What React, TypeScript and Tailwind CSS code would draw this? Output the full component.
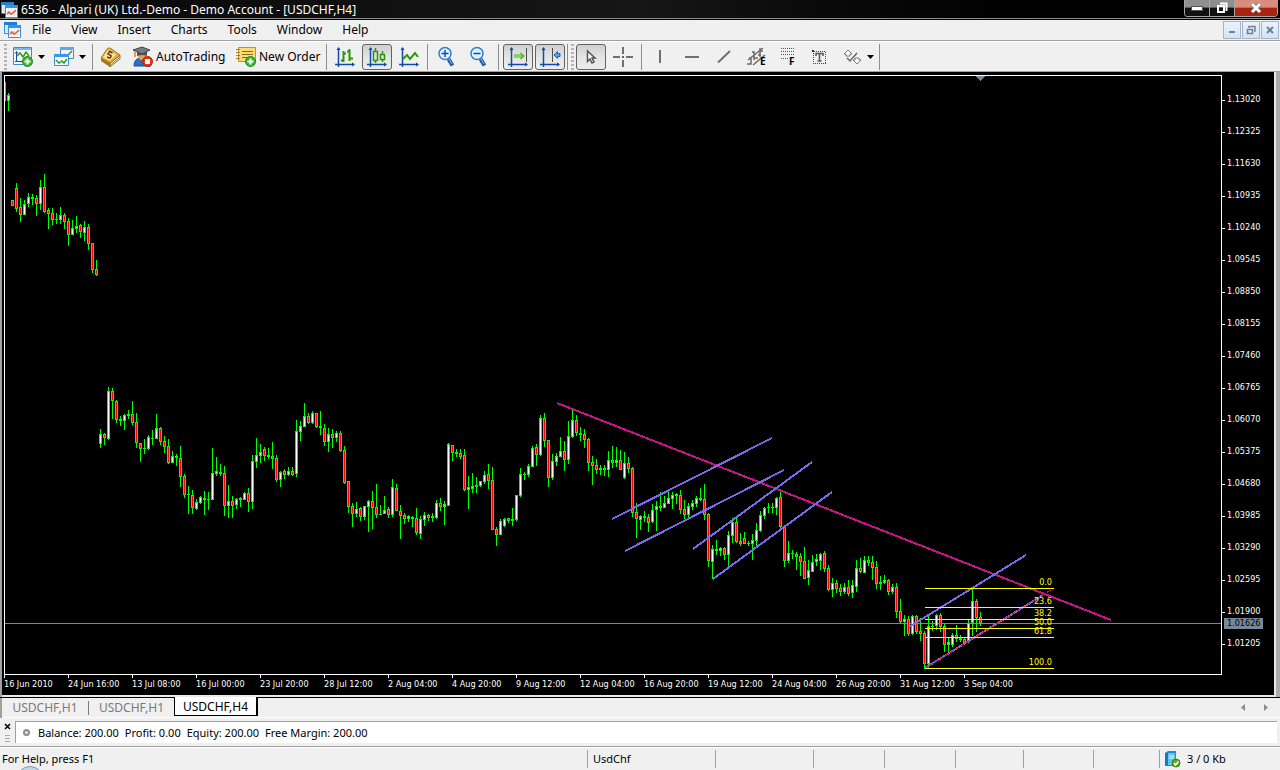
import type { ReactNode } from 'react';
import clsx from 'clsx';

// [high, body top, body bottom, low, rising]
type Candle = [number, number, number, number, 0 | 1];

const FIRST_CANDLE_X = 8;
const CANDLE_STEP = 4;

const CANDLES: Candle[] = [
  [93, 95, 100, 110, 1], [200, 200, 205, 205, 0], [183, 188, 208, 211, 0], [198, 207, 214, 221, 0],
  [200, 204, 214, 214, 1], [193, 197, 203, 206, 1], [194, 197, 198, 204, 1], [195, 198, 203, 215, 0],
  [180, 187, 203, 209, 1], [174, 187, 211, 212, 0], [208, 210, 213, 228, 0], [208, 213, 219, 224, 0],
  [213, 219, 219, 223, 1], [207, 215, 219, 223, 1], [213, 215, 221, 228, 0], [218, 221, 234, 245, 0],
  [220, 228, 234, 234, 1], [216, 226, 228, 232, 1], [224, 225, 231, 237, 0], [221, 227, 232, 240, 1],
  [224, 227, 243, 249, 0], [243, 243, 269, 272, 0], [260, 269, 274, 275, 0], [429, 434, 443, 447, 1],
  [433, 434, 437, 444, 0], [387, 391, 438, 439, 1], [388, 391, 400, 418, 0], [400, 401, 419, 422, 0],
  [416, 419, 420, 425, 1], [414, 415, 420, 429, 1], [410, 414, 415, 418, 1], [401, 414, 422, 424, 0],
  [413, 422, 442, 447, 0], [443, 443, 448, 461, 0], [439, 448, 448, 453, 1], [435, 437, 448, 449, 1],
  [430, 438, 438, 444, 1], [414, 428, 438, 438, 1], [427, 428, 441, 444, 0], [436, 441, 446, 452, 0],
  [439, 446, 462, 463, 0], [451, 456, 462, 462, 1], [454, 456, 457, 465, 1], [446, 458, 476, 486, 0],
  [474, 476, 494, 497, 0], [486, 494, 494, 513, 1], [490, 495, 507, 513, 0], [499, 502, 508, 509, 1],
  [496, 497, 502, 503, 1], [491, 498, 499, 514, 1], [492, 499, 499, 509, 1], [448, 473, 499, 499, 1],
  [457, 471, 473, 475, 1], [464, 472, 473, 475, 1], [466, 473, 505, 515, 0], [485, 501, 505, 517, 1],
  [496, 501, 505, 517, 0], [498, 499, 504, 508, 1], [497, 498, 499, 506, 1], [492, 493, 499, 499, 1],
  [488, 493, 501, 511, 0], [455, 461, 501, 508, 1], [438, 455, 461, 467, 1], [444, 452, 455, 462, 1],
  [447, 449, 455, 460, 0], [448, 455, 456, 458, 1], [442, 456, 458, 468, 0], [455, 458, 479, 481, 0],
  [471, 472, 479, 486, 1], [469, 471, 474, 478, 0], [467, 471, 474, 475, 1], [467, 471, 474, 475, 0],
  [420, 431, 473, 476, 1], [421, 426, 431, 440, 1], [403, 416, 426, 426, 1], [413, 416, 422, 423, 0],
  [411, 413, 422, 423, 1], [413, 413, 426, 427, 0], [411, 426, 427, 434, 1], [424, 428, 441, 445, 0],
  [428, 434, 441, 451, 1], [429, 434, 437, 447, 0], [431, 433, 437, 441, 1], [431, 433, 450, 451, 0],
  [446, 450, 482, 483, 0], [481, 481, 506, 512, 0], [503, 506, 513, 526, 0], [502, 509, 513, 516, 1],
  [507, 508, 516, 520, 0], [506, 506, 516, 519, 1], [500, 501, 506, 531, 1], [491, 501, 507, 528, 0],
  [484, 507, 514, 517, 0], [505, 514, 514, 514, 1], [496, 510, 513, 513, 1], [507, 509, 514, 517, 0],
  [479, 487, 514, 516, 1], [484, 488, 510, 510, 0], [505, 511, 515, 538, 0], [513, 515, 518, 523, 0],
  [515, 516, 518, 521, 1], [516, 517, 518, 526, 1], [508, 518, 532, 534, 0], [516, 519, 533, 538, 1],
  [512, 515, 519, 525, 1], [514, 515, 517, 520, 0], [513, 516, 517, 521, 1], [500, 503, 517, 518, 1],
  [498, 503, 506, 510, 0], [501, 504, 506, 524, 1], [443, 444, 505, 505, 1], [445, 445, 452, 460, 0],
  [449, 452, 453, 456, 1], [449, 453, 456, 458, 0], [449, 455, 489, 490, 0], [476, 487, 489, 508, 1],
  [473, 486, 488, 492, 1], [477, 485, 486, 492, 1], [481, 481, 485, 486, 1], [471, 475, 481, 483, 1],
  [464, 474, 480, 488, 0], [467, 480, 529, 529, 0], [527, 529, 534, 545, 0], [519, 521, 534, 534, 1],
  [518, 519, 525, 526, 1], [518, 518, 520, 522, 0], [508, 519, 520, 525, 1], [495, 495, 519, 520, 1],
  [468, 474, 495, 496, 1], [472, 474, 474, 479, 1], [464, 466, 474, 476, 1], [446, 448, 466, 466, 1],
  [444, 447, 454, 465, 0], [415, 418, 454, 455, 1], [413, 418, 440, 446, 0], [440, 440, 477, 486, 0],
  [454, 461, 477, 479, 1], [453, 456, 461, 465, 1], [437, 451, 456, 456, 1], [441, 451, 459, 470, 0],
  [421, 436, 459, 463, 1], [410, 420, 436, 437, 1], [415, 420, 432, 435, 0], [427, 433, 434, 440, 1],
  [429, 434, 439, 447, 0], [438, 439, 462, 470, 0], [456, 462, 465, 484, 0], [459, 465, 469, 473, 0],
  [465, 468, 469, 474, 1], [465, 468, 469, 475, 1], [451, 460, 469, 476, 1], [446, 460, 462, 467, 0],
  [447, 460, 462, 466, 1], [450, 460, 469, 469, 0], [452, 463, 477, 478, 1], [457, 463, 468, 472, 0],
  [467, 468, 512, 516, 0], [503, 512, 518, 537, 0], [515, 516, 519, 529, 1], [511, 516, 517, 521, 1],
  [514, 517, 522, 531, 0], [504, 510, 521, 522, 1], [501, 506, 509, 530, 1], [492, 506, 507, 510, 1],
  [496, 503, 507, 507, 1], [490, 498, 503, 503, 1], [492, 495, 498, 508, 1], [493, 494, 495, 503, 1],
  [490, 495, 509, 513, 0], [500, 509, 514, 518, 0], [503, 506, 514, 517, 1], [500, 503, 506, 509, 1],
  [496, 498, 503, 506, 1], [488, 498, 499, 500, 1], [484, 499, 514, 519, 0], [513, 514, 560, 566, 0],
  [545, 549, 561, 578, 1], [540, 549, 550, 554, 1], [547, 548, 550, 555, 1], [547, 548, 554, 559, 0],
  [531, 535, 554, 567, 1], [518, 522, 535, 542, 1], [518, 522, 541, 542, 0], [533, 541, 543, 545, 0],
  [532, 538, 543, 543, 0], [541, 543, 543, 545, 1], [534, 540, 543, 559, 1], [523, 530, 540, 545, 1],
  [511, 515, 530, 531, 1], [507, 508, 515, 518, 1], [503, 507, 507, 512, 1], [503, 507, 507, 512, 1],
  [497, 498, 507, 514, 1], [492, 497, 526, 527, 0], [525, 527, 560, 566, 0], [541, 553, 560, 562, 1],
  [550, 553, 553, 558, 1], [552, 554, 556, 569, 0], [553, 556, 561, 575, 0], [547, 561, 578, 578, 0],
  [560, 570, 577, 584, 1], [555, 562, 571, 571, 1], [554, 559, 561, 565, 1], [553, 554, 560, 569, 1],
  [551, 553, 568, 571, 0], [565, 568, 589, 590, 0], [578, 583, 589, 596, 1], [580, 583, 588, 592, 0],
  [584, 588, 591, 595, 0], [583, 587, 591, 593, 1], [580, 587, 593, 595, 0], [580, 585, 592, 597, 1],
  [560, 568, 586, 591, 1], [558, 568, 571, 572, 0], [556, 560, 572, 572, 1], [556, 560, 562, 565, 0],
  [556, 562, 567, 579, 0], [561, 567, 583, 588, 0], [576, 582, 583, 589, 1], [575, 580, 582, 583, 1],
  [579, 580, 591, 594, 0], [584, 587, 591, 593, 1], [583, 587, 611, 617, 0], [599, 611, 621, 623, 0],
  [615, 619, 621, 635, 1], [616, 619, 633, 635, 0], [615, 616, 633, 634, 1], [615, 616, 631, 633, 0],
  [618, 631, 633, 640, 0], [631, 633, 663, 668, 0], [615, 626, 663, 667, 1], [621, 626, 626, 630, 1],
  [614, 615, 625, 629, 1], [613, 615, 626, 631, 0], [623, 626, 644, 651, 0], [638, 642, 644, 652, 1],
  [633, 635, 644, 646, 1], [625, 635, 638, 641, 0], [635, 638, 639, 641, 1], [637, 639, 642, 642, 0],
  [620, 623, 641, 642, 1], [589, 601, 622, 635, 1], [599, 601, 617, 631, 0], [612, 617, 622, 625, 0],
];

const TREND_LINES = [
  { x1: 557, y1: 403, x2: 1111, y2: 620, color: '#c71585' },
  { x1: 612, y1: 519, x2: 772, y2: 438, color: '#7b68ee' },
  { x1: 625, y1: 551, x2: 784, y2: 470, color: '#7b68ee' },
  { x1: 693, y1: 549, x2: 812, y2: 462, color: '#7b68ee' },
  { x1: 713, y1: 579, x2: 832, y2: 492, color: '#7b68ee' },
  { x1: 909, y1: 627, x2: 1026, y2: 555, color: '#7b68ee' },
  { x1: 925, y1: 668, x2: 1043, y2: 595, color: '#7b68ee' },
];

const FIBO_LEVELS = [
  { label: '0.0', y: 588 },
  { label: '23.6', y: 607 },
  { label: '38.2', y: 619 },
  { label: '50.0', y: 628 },
  { label: '61.8', y: 637 },
  { label: '100.0', y: 668 },
];

const PRICES = [
  '1.13020', '1.12325', '1.11630', '1.10935', '1.10240', '1.09545',
  '1.08850', '1.08155', '1.07460', '1.06765', '1.06070', '1.05375',
  '1.04680', '1.03985', '1.03290', '1.02595', '1.01900', '1.01205',
];

const TIMES = [
  '16 Jun 2010', '24 Jun 16:00', '13 Jul 08:00', '16 Jul 00:00',
  '23 Jul 20:00', '28 Jul 12:00', '2 Aug 04:00', '4 Aug 20:00',
  '9 Aug 12:00', '12 Aug 04:00', '16 Aug 20:00', '19 Aug 12:00',
  '24 Aug 04:00', '26 Aug 20:00', '31 Aug 12:00', '3 Sep 04:00',
];

const MENUS = ['File', 'View', 'Insert', 'Charts', 'Tools', 'Window', 'Help'];

function Icon({ size = 20, children }: { size?: number; children: ReactNode }) {
  return (
    <svg
      width={size}
      height={size}
      viewBox={`0 0 ${size} ${size}`}
      fill="none"
      className="shrink-0 overflow-visible"
      aria-hidden="true"
    >
      {children}
    </svg>
  );
}

function AppIcon() {
  return (
    <Icon size={17}>
      <path d="M.5 1.5h12v11H.5z" fill="#e8f3fb" stroke="#2f8fdc" />
      <path d="M0 1h13v3H0z" fill="#1f7fd6" />
      <path d="M2 6h3M2 8h3M2 10h3" stroke="#b9d3e6" />
      <path d="M4.5 4.5h12v12h-12z" fill="#fff" stroke="#3f8fd0" />
      <path d="M4 4h13v3H4z" fill="#2f96e8" />
      <path d="M7.5 7v9M10.5 7v9M13.5 7v9M5 10.5h11M5 13.5h11" stroke="#dfe6ec" />
      <path d="m6 13 2-2 2 2 2-1 3-3" stroke="#f0562a" strokeWidth="1.5" />
    </Icon>
  );
}

function PlusBadge() {
  return (
    <>
      <circle cx="14.5" cy="14.5" r="5" fill="#3fb52c" stroke="#1f8a18" />
      <path d="M14.5 11.5v6M11.5 14.5h6" stroke="#fff" strokeWidth="2" />
    </>
  );
}

function NewChartIcon() {
  return (
    <Icon>
      <path d="M.5.5h18v17H.5z" fill="#eef7fd" stroke="#3c8ed0" />
      <path d="M1 1h17v2H1z" fill="#79b9ea" />
      <path d="M3.5 5v10M2 14.5h15M2 6.5l1.5-2L5 6.5" stroke="#1c4f9a" />
      <path d="m4 9 3-3 3 4 3-5 3 4" stroke="#2f9a1c" strokeWidth="1.5" />
      <PlusBadge />
    </Icon>
  );
}

function ProfilesIcon() {
  return (
    <Icon>
      <path d="M6.5.5h13v11h-13z" fill="#eef7fd" stroke="#3c8ed0" />
      <path d="M6 0h14v3H6z" fill="#5fa9e6" />
      <path d="m10 7 3 2 5-5" stroke="#2f9a1c" strokeWidth="1.5" />
      <path d="M.5 7.5h14v11H.5z" fill="#f4faff" stroke="#3c8ed0" />
      <path d="M0 7h15v3H0z" fill="#3c98e2" />
      <path d="m2 13 3 3 3-2 2 2 3-4" stroke="#2f9a1c" strokeWidth="1.5" />
    </Icon>
  );
}

function BookIcon() {
  return (
    <Icon>
      <path d="m0 11 9 5v4l-9-6z" fill="#a87418" />
      <path d="m9 16 10-8v4L9 20z" fill="#f3e6b8" stroke="#7d5710" strokeWidth=".8" />
      <path d="m9.500 18 9.500-8" stroke="#8a6420" strokeWidth=".8" />
      <path d="M0 11 6 2q1.500-2 4-.5L19 8 9 16z" fill="#e3b23c" stroke="#94670f" strokeWidth=".8" />
      <path d="M2 10.500 7 3l8 4.500-6 6z" fill="#fae3a0" />
      <path d="m11.500 6-3-1.500L7 7l3 1.500q.5 2-1.500 2.500L6 10" stroke="#5c400a" strokeWidth="1.400" />
    </Icon>
  );
}

function AutoTradingIcon() {
  return (
    <Icon>
      <path d="M1 19q0-7 6-8h5q5 2 6 8z" fill="#2b6fc4" stroke="#184d94" />
      <path d="M5 8q0 5 4 5t4-5z" fill="#e7a23c" />
      <path d="M4 4h10v5q-5-2-10 0z" fill="#4b4f55" />
      <path d="m0 3 9-3 8 3-8 4z" fill="#777c82" stroke="#44484d" />
      <path d="M2 4v6" stroke="#d18f26" strokeWidth="1.5" />
      <circle cx="14.5" cy="14.5" r="5" fill="#e53518" stroke="#b81c08" />
      <path d="M12 12h5v5h-5z" fill="#fff" />
    </Icon>
  );
}

function NewOrderIcon() {
  return (
    <Icon>
      <path d="M2.5.5h17v14h-17z" fill="#fbdc74" stroke="#c3912a" />
      <path d="M6 4.5h11M6 7.5h11M6 10.5h7" stroke="#8f681c" />
      <path d="M0 2.5h4M0 5.5h4M0 8.5h4M0 11.5h4" stroke="#b07e21" />
      <PlusBadge />
    </Icon>
  );
}

function Axes() {
  return (
    <>
      <path d="M3.5 1v19M0 17.5h19" stroke="#1349ad" strokeWidth="1.5" />
      <path d="m1.5 3 2-3 2 3zM17 15.5l3 2-3 2z" fill="#1349ad" />
    </>
  );
}

function BarsIcon() {
  return (
    <Icon>
      <Axes />
      <path d="M8.5 4v11M6 13.5h3M8 6.5h3M14.5 2v12M12 4.5h3M14 11.5h4" stroke="#2b9708" strokeWidth="2" />
    </Icon>
  );
}

function CandlesIcon() {
  return (
    <Icon>
      <Axes />
      <path d="M8.5 1v3M8.5 13v3M6.5 4.5h4v9h-4zM15.5 4v3M15.5 12v3M13.5 7.5h4v5h-4z" stroke="#2b9708" strokeWidth="1.5" />
    </Icon>
  );
}

function LineIcon() {
  return (
    <Icon>
      <Axes />
      <path d="m4 12 4-4 3 4 5-6 3 4" stroke="#2b9708" strokeWidth="2" />
    </Icon>
  );
}

function ZoomIcon({ plus = false }: { plus?: boolean }) {
  return (
    <Icon>
      <path d="m11.5 12 4 6.5" stroke="#2458a8" strokeWidth="4" />
      <path d="m12 12 3 5" stroke="#8cb8e8" />
      <circle cx="8" cy="6.5" r="6" fill="#dff1fd" stroke="#2c7fd2" strokeWidth="1.5" />
      <path d="M4.5 6.5h7" stroke="#124ba8" strokeWidth="1.5" />
      {plus && <path d="M8 3v7" stroke="#124ba8" strokeWidth="1.5" />}
    </Icon>
  );
}

function AutoScrollIcon() {
  return (
    <Icon>
      <Axes />
      <path d="M18.5 1v14" stroke="#4d4d4d" />
      <path d="M6 7.5h6.500V5l4.500 4-4.500 4v-2.500H6z" fill="#57b82f" />
      <path d="M6 9h8" stroke="#b4e58c" />
    </Icon>
  );
}

function ChartShiftIcon() {
  return (
    <Icon>
      <Axes />
      <path d="M12.5 1v14" stroke="#4d4d4d" />
      <path d="m14 8 3.5-3.5v2H20v3h-2.5v2z" fill="#5f9eea" stroke="#1f60bd" />
    </Icon>
  );
}

function CursorIcon() {
  return (
    <Icon>
      <path d="M6.5 4v10.5l2.500-2.500 2 4 2-1-2-4h3z" fill="#fff" stroke="#555" strokeWidth="1.5" />
    </Icon>
  );
}

function CrosshairIcon() {
  return (
    <Icon>
      <path d="M10 0v7M10 13v7M0 10h7M13 10h7" stroke="#707070" strokeWidth="2" />
      <path d="M9 9h2v2H9z" fill="#666" />
    </Icon>
  );
}

function ChannelIcon() {
  return (
    <Icon>
      <path d="m2 13 15-12M7 18 19 8M1 17h4v-6H3M8 13V5H6M8 11h4M14 10V1M12 8h3M14 4h3" stroke="#6b6b6b" strokeWidth="1.5" />
      <text x="14" y="18" fill="#000" className="text-[10px] font-bold">E</text>
    </Icon>
  );
}

function FiboIcon() {
  return (
    <Icon>
      <path
        d="M3 1.5h14M3 4.5h14M3 7.5h14M3 11.5h7"
        stroke="#555"
        strokeDasharray="1 1"
        shapeRendering="crispEdges"
      />
      <text x="11" y="18" fill="#000" className="text-[10px] font-bold">F</text>
    </Icon>
  );
}

function TextIcon() {
  return (
    <Icon>
      <path d="M3.5 4.5h12v12h-12z" stroke="#444" strokeDasharray="1 1" shapeRendering="crispEdges" />
      <path d="M2 3h2v2H2z" fill="#333" />
      <path d="M6 9V6.500h7V9M9.500 7v7M7.500 14h4" stroke="#555" strokeWidth="1.5" />
    </Icon>
  );
}

function ArrowsIcon() {
  return (
    <Icon>
      <path d="m5 4 4 4H7v2H3V8H1zM14 18l-4-4h2v-2h4v2h2z" fill="#fff" stroke="#777" transform="translate(1 -1)" />
      <path d="m5 11 3 3 7-8" stroke="#666" strokeWidth="1.5" />
    </Icon>
  );
}

function Caret() {
  return (
    <svg width="7" height="4" aria-hidden="true">
      <path d="M0 0h7L3.5 4z" fill="#000" />
    </svg>
  );
}

function Grip() {
  return (
    <span className="h-[26px] w-[3px] shrink-0 bg-[repeating-linear-gradient(#b4b4b4_0_2px,#efefef_2px_4px)]" />
  );
}

function Separator() {
  return <span className="h-[26px] w-px shrink-0 bg-[#8e8e8e]" />;
}

function ToolButton({
  label,
  pressed = false,
  children,
}: {
  label: string;
  pressed?: boolean;
  children: ReactNode;
}) {
  return (
    <button
      type="button"
      aria-label={label}
      aria-pressed={pressed}
      className={clsx(
        'flex h-[26px] w-[30px] shrink-0 items-center justify-center rounded-[3px] border',
        pressed
          ? 'border-[#626262] bg-linear-to-b from-[#cfcfcf] via-[#e4e4e4] to-[#ececec]'
          : 'border-transparent',
      )}
    >
      {children}
    </button>
  );
}

function TitleBar() {
  return (
    <header className="flex h-5 shrink-0 items-start border-b border-black bg-linear-to-r from-[#080808] via-[#161616] to-black pl-px text-white shadow-[inset_0_-1px_0_#8b8b8b]">
      <div className="mt-px">
        <AppIcon />
      </div>
      <h1 className="ml-[3px] flex-1 text-xs leading-[19px]">
        6536 - Alpari (UK) Ltd.-Demo - Demo Account - [USDCHF,H4]
      </h1>
      <div className="mr-0.5 flex h-[17px] overflow-hidden rounded-b-[4px] border border-t-0 border-[#a5a5a5]">
        <button
          type="button"
          aria-label="Minimize"
          className="flex w-[25px] items-center justify-center border-r border-[#a5a5a5] bg-linear-to-b from-[#8f8f8f] from-45% to-[#111] to-50%"
        >
          <svg width="12" height="5" aria-hidden="true">
            <rect x=".5" y=".5" width="11" height="4" fill="#fff" stroke="#555" />
          </svg>
        </button>
        <button
          type="button"
          aria-label="Restore"
          className="flex w-[25px] items-center justify-center border-r border-[#a5a5a5] bg-linear-to-b from-[#8f8f8f] from-45% to-[#111] to-50%"
        >
          <svg width="12" height="12" fill="none" aria-hidden="true">
            <path d="M4 1.5h6.500V9" stroke="#fff" strokeWidth="2" />
            <path d="M2 4h6v6H2z" stroke="#fff" strokeWidth="2" />
          </svg>
        </button>
        <button
          type="button"
          aria-label="Close"
          className="flex w-[42px] items-center justify-center bg-linear-to-b from-[#d98d7c] from-45% to-[#a82410] to-50%"
        >
          <svg width="12" height="10" fill="none" aria-hidden="true">
            <path d="m2 1 8 8M10 1 2 9" stroke="#555" strokeWidth="4" />
            <path d="m2 1 8 8M10 1 2 9" stroke="#fff" strokeWidth="3" />
          </svg>
        </button>
      </div>
    </header>
  );
}

function MdiButton({ label, children }: { label: string; children: ReactNode }) {
  return (
    <button
      type="button"
      aria-label={label}
      className="flex size-[18px] items-center justify-center border border-[#a3b4c8] bg-linear-to-b from-[#eaf3fc] to-[#d3e3f4]"
    >
      <svg width="10" height="10" fill="none" stroke="#6f8196" strokeWidth="2" aria-hidden="true">
        {children}
      </svg>
    </button>
  );
}

function MenuBar() {
  return (
    <nav className="flex h-[22px] shrink-0 items-start border-b border-white bg-[#f0f0f0] pt-px pl-1 shadow-[inset_0_-1px_0_#a0a0a0]">
      <AppIcon />
      <div className="flex flex-1 pl-px">
        {MENUS.map((menu) => (
          <button key={menu} type="button" className="px-[10px] text-xs leading-[18px]">
            {menu}
          </button>
        ))}
      </div>
      <div className="mr-px flex gap-px">
        <MdiButton label="Minimize chart">
          <path d="M2 7h6" />
        </MdiButton>
        <MdiButton label="Restore chart">
          <path d="M3 3V1.5h6V6H8M1.5 4.5h5v4h-5z" strokeWidth="1.5" />
        </MdiButton>
        <MdiButton label="Close chart">
          <path d="m2 2 6 6M8 2 2 8" />
        </MdiButton>
      </div>
    </nav>
  );
}

function Toolbar() {
  return (
    <div
      role="toolbar"
      className="flex h-[29px] shrink-0 items-center bg-[#f0f0f0] pl-1"
    >
      <Grip />
      <button type="button" aria-label="New chart" className="flex w-10 items-center gap-[5px] pl-1.5">
        <NewChartIcon />
        <Caret />
      </button>
      <button type="button" aria-label="Profiles" className="flex w-[45px] items-center gap-[5px] pl-[7px]">
        <ProfilesIcon />
        <Caret />
      </button>
      <Separator />
      <button type="button" aria-label="MetaEditor" className="flex w-10 pl-2">
        <BookIcon />
      </button>
      <button type="button" className="flex w-[103px] items-center gap-[3px] text-xs">
        <AutoTradingIcon />
        AutoTrading
      </button>
      <button type="button" className="flex w-[90px] items-center gap-[3px] text-xs">
        <NewOrderIcon />
        New Order
      </button>
      <Separator />
      <div className="flex gap-0.5 px-[3px]">
        <ToolButton label="Bar chart"><BarsIcon /></ToolButton>
        <ToolButton label="Candlesticks" pressed><CandlesIcon /></ToolButton>
        <ToolButton label="Line chart"><LineIcon /></ToolButton>
      </div>
      <Separator />
      <div className="flex gap-0.5 px-1">
        <ToolButton label="Zoom in"><ZoomIcon plus /></ToolButton>
        <ToolButton label="Zoom out"><ZoomIcon /></ToolButton>
      </div>
      <Separator />
      <div className="flex gap-0.5 pr-0.5 pl-1">
        <ToolButton label="Auto scroll" pressed><AutoScrollIcon /></ToolButton>
        <ToolButton label="Chart shift" pressed><ChartShiftIcon /></ToolButton>
      </div>
      <Separator />
      <div className="flex items-center gap-0.5 px-[3px]">
        <Grip />
        <ToolButton label="Cursor" pressed><CursorIcon /></ToolButton>
        <ToolButton label="Crosshair"><CrosshairIcon /></ToolButton>
      </div>
      <Separator />
      <div className="flex gap-0.5 pl-[3px]">
        <ToolButton label="Vertical line">
          <Icon><path d="M10 3v13" stroke="#707070" strokeWidth="2" /></Icon>
        </ToolButton>
        <ToolButton label="Horizontal line">
          <Icon><path d="M3 10h14" stroke="#707070" strokeWidth="2" /></Icon>
        </ToolButton>
        <ToolButton label="Trendline">
          <Icon><path d="M4 15.5 16 4" stroke="#707070" strokeWidth="2" /></Icon>
        </ToolButton>
        <ToolButton label="Equidistant channel"><ChannelIcon /></ToolButton>
        <ToolButton label="Fibonacci retracement"><FiboIcon /></ToolButton>
        <ToolButton label="Text label"><TextIcon /></ToolButton>
        <button type="button" aria-label="Arrows" className="flex w-[42px] items-center gap-[5px] pl-[5px]">
          <ArrowsIcon />
          <Caret />
        </button>
      </div>
      <Separator />
    </div>
  );
}

function CandleShape({ x, candle }: { x: number; candle: Candle }) {
  const [high, top, bottom, low, rising] = candle;
  const inner = bottom - top - 1;

  return (
    <>
      <rect x={x} y={high} width="1" height={low - high + 1} fill="#00ff00" />
      <rect x={x - 1} y={top} width="3" height={bottom - top + 1} fill="#00ff00" />
      {inner > 0 && (
        <rect x={x} y={top + 1} width="1" height={inner} fill={rising ? '#ffffff' : '#ff0000'} />
      )}
    </>
  );
}

function Plot() {
  return (
    <svg
      className="h-full min-h-[598px] w-full text-[9px]"
      shapeRendering="crispEdges"
      role="img"
      aria-label="USDCHF H4 candlestick chart"
    >
      <g transform="translate(-5 -76)">
        <path d="M0 623.5h1600" stroke="#778899" />
        <path d="M975 76h11l-5.5 5z" fill="#778899" />
        <rect x="5" y="82" width="1" height="19" fill="#00ff00" />
        {CANDLES.map((candle, i) => (
          <CandleShape key={i} x={FIRST_CANDLE_X + i * CANDLE_STEP} candle={candle} />
        ))}
        {TREND_LINES.map(({ color, ...line }) => (
          <line key={`${line.x1}-${line.y1}`} {...line} stroke={color} strokeWidth="2" />
        ))}
        <path d="M925 668.5 1053 588.5" stroke="#ff0000" strokeDasharray="4 2" />
        {FIBO_LEVELS.map(({ label, y }) => (
          <g key={label}>
            <rect x="925" y={y} width="129" height="1" fill="#ffff00" />
            <text x="1052" y={y - 3} textAnchor="end" fill="#ffff00">
              {label}
            </text>
          </g>
        ))}
      </g>
    </svg>
  );
}

function ChartWindow() {
  return (
    <main className="flex flex-1 border-t border-l-2 border-[#a0a0a0] bg-[#ababab] pr-1">
      <div className="grid flex-1 grid-cols-[minmax(0,1fr)_52px] grid-rows-[1fr_20px] border-r-2 border-b-2 border-[#e8e8e8] bg-black pt-[3px] pl-0.5 font-['DejaVu_Sans_Condensed','DejaVu_Sans',sans-serif] text-[9px] text-white">
        <div className="flex overflow-hidden border border-white">
          <Plot />
        </div>
        <div className="relative pt-[9px]">
          {PRICES.map((price) => (
            <div key={price} className="flex h-8 items-center gap-0.5">
              <span className="h-px w-[3px] bg-white" />
              {price}
            </div>
          ))}
          <span className="absolute top-[543px] left-0.5 h-[11px] w-[39px] bg-[#778899] pl-[3px] leading-[11px] text-black">
            1.01626
          </span>
        </div>
        <div className="col-span-2 flex overflow-hidden">
          {TIMES.map((time) => (
            <div key={time} className="w-16 shrink-0 whitespace-nowrap">
              <span className="block h-[3px] w-px bg-white" />
              <span className="block leading-[13px]">{time}</span>
            </div>
          ))}
        </div>
      </div>
    </main>
  );
}

function ChartTabs() {
  return (
    <div className="flex h-[21px] shrink-0 items-start border-t border-black bg-[#f0f0f0] text-xs text-[#7a7a7a] shadow-[inset_2px_0_0_#a0a0a0,inset_0_-1px_0_#fff]">
      <div role="tablist" className="flex flex-1 items-start">
        <button type="button" role="tab" aria-selected="false" className="w-[88px] pl-0.5 leading-5">
          USDCHF,H1
        </button>
        <span className="mt-[3px] h-[14px] w-px bg-[#7a7a7a]" />
        <button type="button" role="tab" aria-selected="false" className="w-[85px] leading-5">
          USDCHF,H1
        </button>
        <button
          type="button"
          role="tab"
          aria-selected="true"
          className="-mt-px h-[19px] w-[84px] border border-t-0 border-r-2 border-black bg-white leading-5 text-black"
        >
          USDCHF,H4
        </button>
      </div>
      <div className="mt-1.5 mr-3 flex gap-[17px]">
        <button type="button" aria-label="Scroll tabs left">
          <svg width="5" height="7" className="block" aria-hidden="true">
            <path d="M4 0v7L0 3.5z" fill="#8c8c8c" />
          </svg>
        </button>
        <button type="button" aria-label="Scroll tabs right">
          <svg width="5" height="7" className="block" aria-hidden="true">
            <path d="M1 0v7l4-3.5z" fill="#8c8c8c" />
          </svg>
        </button>
      </div>
    </div>
  );
}

function AccountBar() {
  return (
    <section className="flex h-7 shrink-0 bg-[#f0f0f0] pt-[3px] pr-[3px] pb-[3px]">
      <div className="flex w-[15px] flex-col items-center gap-[5px] pt-0.5">
        <button type="button" aria-label="Close panel">
          <svg width="7" height="7" className="block" aria-hidden="true">
            <path d="m1 1 5 5M6 1 1 6" stroke="#000" strokeWidth="1.5" />
          </svg>
        </button>
        <span className="h-[7px] w-[5px] bg-[repeating-linear-gradient(#aaa_0_1px,#f0f0f0_1px_3px)]" />
      </div>
      <div className="flex flex-1 items-center border-t border-l border-[#a0a0a0] bg-white pl-1.5 text-[11px]">
        <svg width="9" height="9" className="mr-[7px]" aria-hidden="true">
          <circle cx="4.5" cy="4.5" r="2.5" fill="#e4e4e4" stroke="#8f8f8f" strokeWidth="2" />
        </svg>
        <p className="flex gap-1.5 leading-4">
          <span>Balance: 200.00</span>
          <span>Profit: 0.00</span>
          <span>Equity: 200.00</span>
          <span>Free Margin: 200.00</span>
        </p>
      </div>
    </section>
  );
}

function StatusCell({ className, children }: { className: string; children?: ReactNode }) {
  return (
    <span
      className={clsx(
        'flex h-[18px] shrink-0 items-center border-l border-[#a0a0a0]',
        className,
      )}
    >
      {children}
    </span>
  );
}

function StatusBar() {
  return (
    <footer className="relative flex h-6 shrink-0 items-center overflow-hidden border-t border-[#a0a0a0] bg-[#f0f0f0] pt-px text-[11px] shadow-[inset_0_1px_0_#fff]">
      <span className="min-w-0 flex-1 pl-0.5">For Help, press F1</span>
      <StatusCell className="w-32 pl-[5px]">UsdChf</StatusCell>
      <StatusCell className="w-[98px]" />
      <StatusCell className="w-[71px]" />
      <StatusCell className="w-[71px]" />
      <StatusCell className="w-[68px]" />
      <StatusCell className="w-[70px]" />
      <StatusCell className="w-[66px]" />
      <StatusCell className="w-[121px] gap-1.5 pl-1">
        <Icon size={17}>
          <path d="m1 2 3-2h8v11l-2 4H1z" fill="#1c8edb" />
          <path d="M4 2h7v12H4z" fill="#63c3f7" />
          <path d="M5 5h5M5 7h5" stroke="#e4f6ff" />
          <path d="M1 2h3v12H1z" fill="#1578c4" />
          <circle cx="12" cy="12" r="4" fill="#5aae1e" stroke="#3c8211" />
          <path d="m10 12 1.5 2 3-3.5" stroke="#fff" strokeWidth="1.5" />
        </Icon>
        3 / 0 Kb
      </StatusCell>
      <span className="absolute top-[19px] left-4 size-7 rounded-full border border-[#7e9cb8] bg-[#c3d6e6]" />
    </footer>
  );
}

export default function App() {
  return (
    <div className="flex min-h-screen flex-col bg-[#f0f0f0] font-['Noto_Sans','Open_Sans',sans-serif] text-black">
      <TitleBar />
      <MenuBar />
      <Toolbar />
      <ChartWindow />
      <ChartTabs />
      <AccountBar />
      <StatusBar />
    </div>
  );
}
